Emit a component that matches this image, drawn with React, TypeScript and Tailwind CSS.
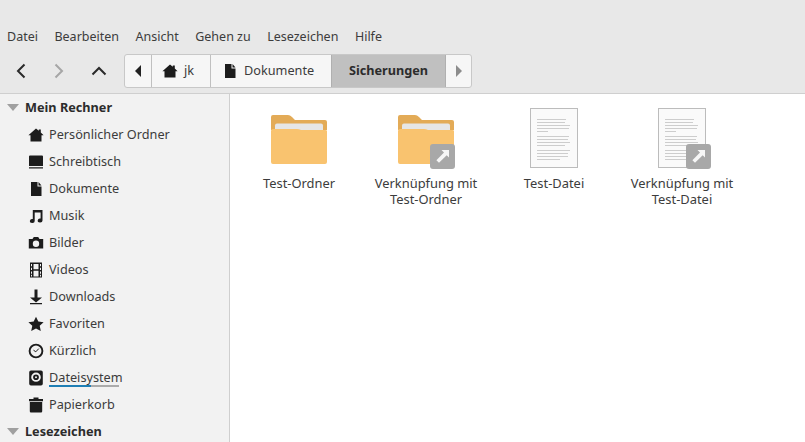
import React from "react";

const I = ({ children }: { children: React.ReactNode }) => (
  <svg width="16" height="16" viewBox="0 0 16 16" fill="#1c1c1c">{children}</svg>
);

const Home = () => <I><path d="M8 1.5 L10.8 3.8 V2.5 H12.8 V5.4 L15.6 8.2 H13.5 V14.5 H2.5 V8.2 H0.4 Z" /></I>;
const Desk = () => <I><path d="M1 2.5 A1 1 0 0 1 2 1.5 H14 A1 1 0 0 1 15 2.5 V12 H1 Z M1 13.2 H15 V14.4 H1 Z" /></I>;
const Doc = () => <I><path d="M3 1 H9.5 V5.5 H13.5 V15 H3 Z M10.5 1 L13.5 4.5 H10.5 Z" /></I>;
const Music = () => <I><path d="M4.8 2 H14.5 V12.5 A2.4 2 0 1 1 12.6 10.6 V4.5 H6.7 V13 A2.4 2 0 1 1 4.8 11.1 Z" /></I>;
const Cam = () => <I><path fillRule="evenodd" d="M0.8 4 H4.5 L5.8 2 H10.2 L11.5 4 H15.2 V13.5 H0.8 Z M8 5.5 A3.2 3.2 0 1 0 8 11.9 A3.2 3.2 0 1 0 8 5.5 Z" /></I>;
const Film = () => <I><path fillRule="evenodd" d="M2 0.5 H14 V15.5 H2 Z M3 2 V4.3 H4 V2 Z M3 5.8 V8 H4 V5.8 Z M3 9.5 V11.7 H4 V9.5 Z M3 12.8 V14.5 H4 V12.8 Z M12 2 V4.3 H13 V2 Z M12 5.8 V8 H13 V5.8 Z M12 9.5 V11.7 H13 V9.5 Z M12 12.8 V14.5 H13 V12.8 Z M5.5 2 V7.3 H10.5 V2 Z M5.5 8.7 V14.5 H10.5 V8.7 Z" /></I>;
const Down = () => <I><path d="M6.5 0.5 H9.5 V8.5 H14 L8 13.5 L2 8.5 H6.5 Z M2 14 H14 V15.3 H2 Z" /></I>;
const Star = () => <I><path d="M8 0.8 L10.3 5.6 L15.6 6.2 L11.7 9.8 L12.8 15 L8 12.4 L3.2 15 L4.3 9.8 L0.4 6.2 L5.7 5.6 Z" /></I>;
const Clock = () => (
  <svg width="16" height="16" viewBox="0 0 16 16" fill="none" stroke="#1c1c1c">
    <circle cx="8" cy="8" r="6.4" strokeWidth="1.9" />
    <path d="M5.5 7.2 L7.8 8.8 L10.8 5.6" strokeWidth="1" />
  </svg>
);
const Disk = () => <I><path fillRule="evenodd" d="M3 0.5 H13 A1.8 1.8 0 0 1 14.8 2.3 V13.7 A1.8 1.8 0 0 1 13 15.5 H3 A1.8 1.8 0 0 1 1.2 13.7 V2.3 A1.8 1.8 0 0 1 3 0.5 Z M8 2.6 A4.8 4.6 0 1 0 8 11.8 A4.8 4.6 0 1 0 8 2.6 Z M8 4.4 A2.9 2.8 0 1 1 8 10 A2.9 2.8 0 1 1 8 4.4 Z M8 6.2 A1 1 0 1 0 8 8.2 A1 1 0 1 0 8 6.2 Z" /></I>;
const Trash = () => <I><path d="M5.5 0.5 H10.5 V2 H15 V4.2 H1 V2 H5.5 Z M1.8 5 H14.2 V14 A1.3 1.3 0 0 1 12.9 15.5 H3.1 A1.3 1.3 0 0 1 1.8 14 Z" /></I>;

const Arrow = () => (
  <span className="block w-[25px] h-[25px] bg-[#a8a8a8] rounded-[3px]">
    <svg width="25" height="25" viewBox="0 0 25 25" fill="#f6f6f6">
      <path d="M11.5 6 H19 V13.5 L16.7 11.2 L9 18.8 L6.4 16.2 L14 8.6 Z" />
    </svg>
  </span>
);

const Folder = () => (
  <svg width="56" height="49" viewBox="0 0 56 49">
    <path d="M2 0 H17 Q19 0 21 2 L24 5 H54 Q56 5 56 7 V15 H0 V2 Q0 0 2 0 Z" fill="#e3ab57" />
    <rect x="4" y="8.5" width="48" height="14" rx="2" fill="#e6e6e6" />
    <path d="M0 16 Q0 14 2 14 H26 Q28 14 30 15 H54 Q56 15 56 16 V47 Q56 49 54 49 H2 Q0 49 0 47 Z" fill="#f9c36f" />
  </svg>
);

const lines: [number, number][] = [
  [11, 29], [14, 28], [17, 33], [20, 32], [23, 11],
  [28, 32], [31, 31], [34, 33], [37, 28],
  [42, 33], [45, 31], [48, 31], [51, 23],
];
const Paper = () => (
  <svg width="48" height="60" viewBox="0 0 48 60" className="block">
    <rect x="0.5" y="0.5" width="47" height="59" fill="#fafafa" stroke="#bcbcbc" />
    {lines.map(([y, w]) => (
      <rect key={y} x="7" y={y} width={w} height="1" fill="#cdcdcd" />
    ))}
  </svg>
);

const FileItem = ({ icon, label }: { icon: React.ReactNode; label: React.ReactNode }) => (
  <div className="w-[128px] flex flex-col items-center text-center">
    <div className="h-[60px] flex items-end justify-center">{icon}</div>
    <div className="mt-[7px] text-[12.9px] leading-[16px] text-[#3c3c3c]">{label}</div>
  </div>
);

const items: [React.ReactNode, string][] = [
  [<Home />, "Persönlicher Ordner"],
  [<Desk />, "Schreibtisch"],
  [<Doc />, "Dokumente"],
  [<Music />, "Musik"],
  [<Cam />, "Bilder"],
  [<Film />, "Videos"],
  [<Down />, "Downloads"],
  [<Star />, "Favoriten"],
  [<Clock />, "Kürzlich"],
  [<Disk />, "Dateisystem"],
  [<Trash />, "Papierkorb"],
];

const Header = ({ t }: { t: string }) => (
  <div className="h-[27px] flex items-center pl-[7px] gap-[6px]">
    <span className="w-0 h-0 border-l-[6px] border-r-[6px] border-t-[7px] border-l-transparent border-r-transparent border-t-[#a0a0a0]" />
    <span className="font-bold text-[12.7px] text-[#2c2c2c]">{t}</span>
  </div>
);

export default function App() {
  return (
    <div className="w-[805px] h-[442px] overflow-hidden flex flex-col bg-white text-[12.7px]" style={{ fontFamily: '"Noto Sans", sans-serif' }}>
      <div className="h-[94px] shrink-0 bg-[#e8e8e8] border-b border-[#cfcfcf] flex flex-col">
        <div className="h-[25px]" />
        <div className="h-[24px] flex items-center pl-[7px] gap-[16.5px] text-[12.5px] text-[#3c3c3c]">
          {["Datei", "Bearbeiten", "Ansicht", "Gehen zu", "Lesezeichen", "Hilfe"].map((m) => <span key={m}>{m}</span>)}
        </div>
        <div className="h-[44px] flex items-center">
          <div className="flex w-[124px] items-center">
            <span className="w-[38px] flex justify-center pl-[4px]">
              <svg width="16" height="18" viewBox="0 0 16 18" fill="none" stroke="#2a2a2a" strokeWidth="2"><path d="M11.5 2.5 L5 9 L11.5 15.5" /></svg>
            </span>
            <span className="w-[42px] flex justify-center">
              <svg width="16" height="18" viewBox="0 0 16 18" fill="none" stroke="#a6a6a6" strokeWidth="2"><path d="M4.5 2.5 L11 9 L4.5 15.5" /></svg>
            </span>
            <span className="w-[38px] flex justify-center">
              <svg width="18" height="16" viewBox="0 0 18 16" fill="none" stroke="#2a2a2a" strokeWidth="2"><path d="M2.5 11.5 L9 5 L15.5 11.5" /></svg>
            </span>
          </div>
          <div className="h-[34px] w-[348px] mt-[-1px] flex rounded-[3px] border border-[#c8c8c8] bg-[#f6f6f6] text-[#3c3c3c]">
            <span className="w-[27px] flex items-center justify-center border-r border-[#c0c0c0]">
              <span className="w-0 h-0 border-y-[6px] border-r-[6px] border-y-transparent border-r-[#222222]" />
            </span>
            <span className="w-[59px] flex items-center pl-[10px] gap-[6px] border-r border-[#c0c0c0]">
              <Home /> jk
            </span>
            <span className="w-[121px] flex items-center pl-[11px] gap-[6px] border-r border-[#b0b0b0]">
              <Doc /> Dokumente
            </span>
            <span className="w-[114px] flex items-center justify-center bg-[#c0c0c0] font-bold text-[#2c2c2c] border-r border-[#b0b0b0]">Sicherungen</span>
            <span className="flex-1 flex items-center justify-center">
              <span className="w-0 h-0 border-y-[6px] border-l-[6px] border-y-transparent border-l-[#8c8c8c]" />
            </span>
          </div>
        </div>
      </div>
      <div className="flex-1 flex min-h-0">
        <div className="w-[230px] shrink-0 bg-[#f2f2f2] border-r border-[#cfcfcf] overflow-hidden">
          <Header t="Mein Rechner" />
          {items.map(([ic, t]) => (
            <div key={t} className="h-[27px] flex items-center pl-[28px] gap-[5px] text-[#3c3c3c]">
              {ic}
              {t === "Dateisystem" ? (
                <span className="relative">
                  {t}
                  <span className="absolute left-0 bottom-0 w-[70px] h-[2px] bg-[#ababab]">
                    <span className="block w-[42px] h-[2px] bg-[#1f7fb5]" />
                  </span>
                </span>
              ) : t}
            </div>
          ))}
          <Header t="Lesezeichen" />
        </div>
        <div className="flex-1 flex items-start pl-[5px] pt-[14px]">
          <FileItem icon={<div className="mb-[4px]"><Folder /></div>} label="Test-Ordner" />
          <div className="ml-[-1px]">
            <FileItem
              icon={<div className="relative mb-[4px]"><Folder /><span className="absolute left-[32px] top-[29px]"><Arrow /></span></div>}
              label={<>Verknüpfung mit<br />Test-Ordner</>}
            />
          </div>
          <FileItem icon={<Paper />} label="Test-Datei" />
          <FileItem
            icon={<div className="relative"><Paper /><span className="absolute left-[28px] top-[36px]"><Arrow /></span></div>}
            label={<>Verknüpfung mit<br />Test-Datei</>}
          />
        </div>
      </div>
    </div>
  );
}
